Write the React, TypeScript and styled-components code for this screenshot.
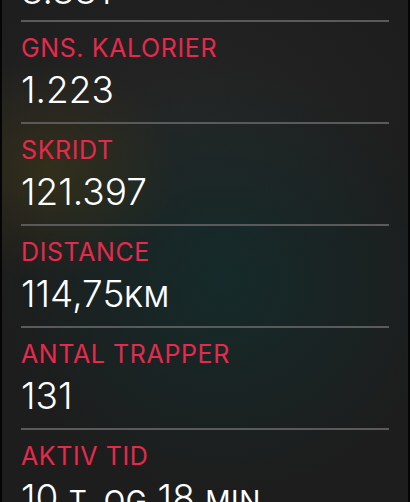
import React from 'react';
import styled, { createGlobalStyle } from 'styled-components';

const GlobalStyle = createGlobalStyle`
  html, body {
    margin: 0;
    padding: 0;
    background: #000;
  }
  body {
    font-family: Inter, "Liberation Sans", sans-serif;
  }
`;

const Screen = styled.div`
  position: relative;
  width: 410px;
  height: 502px;
  overflow: hidden;
  box-sizing: border-box;
  border-left: 2px solid #050505;
  border-right: 2px solid #050505;
  background:
    radial-gradient(ellipse 130px 110px at 45px 170px, rgba(72, 64, 22, 0.45), rgba(72, 64, 22, 0) 100%),
    radial-gradient(ellipse 220px 210px at 220px 280px, rgba(18, 48, 48, 0.7), rgba(18, 48, 48, 0) 100%),
    radial-gradient(ellipse 260px 160px at 180px 110px, rgba(60, 60, 60, 0.25), rgba(60, 60, 60, 0) 100%),
    #1d1d1d;
`;

const List = styled.ul`
  list-style: none;
  margin: -82px 0 0;
  padding: 0 19px;
`;

const Item = styled.li<{ $first?: boolean }>`
  border-top: ${(p) => (p.$first ? 'none' : '2px solid #5a5a5a')};
  padding: ${(p) => (p.$first ? '16px 0 9px' : '11px 0 12px')};
`;

const Label = styled.div`
  height: 30px;
  font-size: 25px;
  line-height: 30px;
  letter-spacing: 0.6px;
  color: #e52a4d;
  text-transform: uppercase;
`;

const Value = styled.div`
  margin-top: 6px;
  height: 41px;
  font-size: 37px;
  font-weight: 300;
  line-height: 41px;
  color: #fff;
  white-space: nowrap;
`;

const Unit = styled.span`
  font-size: 28px;
  font-weight: 400;
  text-transform: uppercase;
  letter-spacing: 0.6px;
`;

type Stat = { label: string; value: React.ReactNode };

const stats: Stat[] = [
  { label: 'Gns. puls', value: '3.331' },
  { label: 'Gns. kalorier', value: '1.223' },
  { label: 'Skridt', value: '121.397' },
  { label: 'Distance', value: <>114,75<Unit>km</Unit></> },
  { label: 'Antal trapper', value: '131' },
  {
    label: 'Aktiv tid',
    value: (
      <>
        10 <Unit>t. og</Unit> 18 <Unit>min</Unit>
      </>
    ),
  },
];

const App: React.FC = () => {
  return (
    <>
      <GlobalStyle />
      <Screen>
        <List>
          {stats.map((s, idx) => (
            <Item key={idx} $first={idx === 0}>
              <Label>{s.label}</Label>
              <Value>{s.value}</Value>
            </Item>
          ))}
        </List>
      </Screen>
    </>
  );
};

export default App;
